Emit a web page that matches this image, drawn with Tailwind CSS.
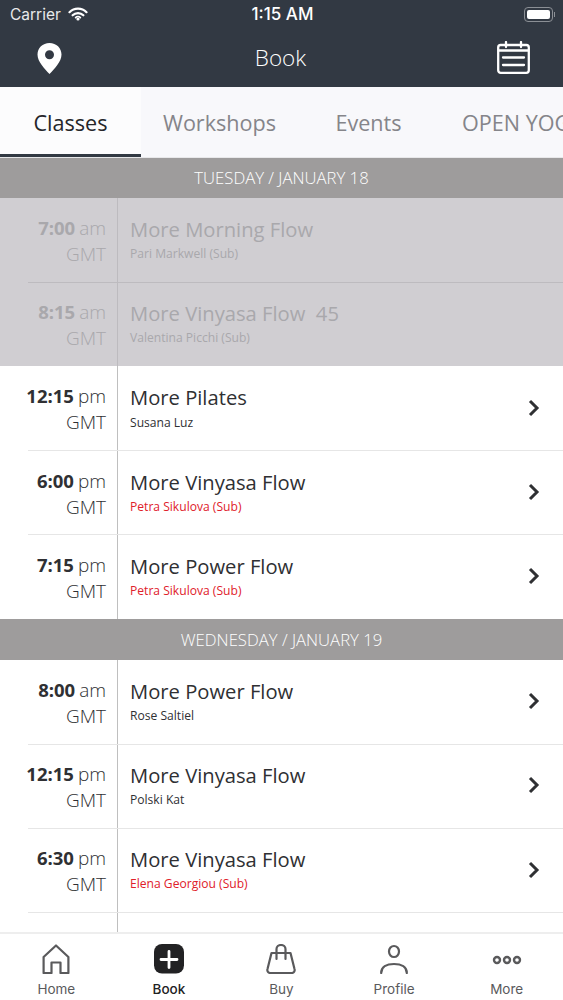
<!DOCTYPE html>
<html lang="en">
<head>
    <meta charset="UTF-8">
    <meta name="viewport" content="width=device-width, initial-scale=1.0">
    <title>Book</title>
    <script src="https://cdn.jsdelivr.net/npm/@tailwindcss/browser@4"></script>
</head>
<body>
<div class="w-[563px] h-[1000px] flex flex-col overflow-hidden bg-white antialiased font-['Open_Sans',sans-serif]">

    <!-- status + nav -->
    <header class="h-[87px] shrink-0 bg-[#323943] text-white flex flex-col">
        <div class="h-[29px] flex items-center justify-between pl-[10px] pr-[8px] font-['Inter',sans-serif] text-[15.500px]">
            <div class="w-[180px] flex items-center gap-[7px] text-[#e8e9ea]">
                <span>Carrier</span>
                <svg width="20" height="15" viewBox="0 0 20 15" fill="none" stroke="#fff" stroke-width="2.200" stroke-linecap="round">
                    <path d="M1.500 5.200a12 12 0 0 1 17 0"/>
                    <path d="M4.600 8.300a7.600 7.600 0 0 1 10.800 0"/>
                    <circle cx="10" cy="12" r="1.600" fill="#fff" stroke="none"/>
                    <path d="M7.600 10.600a3.400 3.400 0 0 1 4.800 0" stroke-width="1.600"/>
                </svg>
            </div>
            <span class="font-medium text-[17px]">1:15 AM</span>
            <div class="w-[180px] flex justify-end items-center">
                <div class="w-[29px] h-[15px] rounded-[4px] border border-[#8b8f95] p-[2px]">
                    <div class="w-full h-full rounded-[2px] bg-white"></div>
                </div>
                <div class="w-[1px] h-[5px] ml-[1px] bg-[#8b8f95]"></div>
            </div>
        </div>
        <div class="flex-1 flex items-center justify-between pl-[37px] pr-[33px] pb-[1px]">
            <svg width="25" height="32" viewBox="0 0 25 32">
                <path fill-rule="evenodd" fill="#fff" d="M12.500 1C5.600 1 .5 6 .5 12.600c0 4 1.800 7 4.200 10.400 2.400 3.200 5.200 6.400 7.800 9 2.600-2.600 5.400-5.800 7.800-9 2.400-3.400 4.200-6.400 4.200-10.400C24.500 6 19.400 1 12.500 1zM12.500 8.300a4.500 4.500 0 1 1 0 9 4.500 4.500 0 0 1 0-9z"/>
            </svg>
            <span class="text-[22.500px] font-light pl-[2px]">Book</span>
            <svg width="33" height="33" viewBox="0 0 33 33" fill="none" stroke="#fff" stroke-width="2.300" stroke-linecap="round" stroke-linejoin="round">
                <rect x="1.200" y="4" width="30.600" height="27.800" rx="2.500"/>
                <path d="M9 1v5M24 1v5M2 9.500h29M6 16.500h21M6 24h21"/>
            </svg>
        </div>
    </header>

    <!-- tabs -->
    <nav class="h-[71px] shrink-0 flex bg-[#f8f8fb] text-[21.600px] text-[#85858a] overflow-hidden whitespace-nowrap border-b border-[#e8e8ea]">
        <div class="w-[141px] shrink-0 flex items-center justify-center pt-[5px] text-[#25262a] border-b-[3px] border-[#323943] bg-white/60">Classes</div>
        <div class="w-[157px] shrink-0 flex items-center justify-center pt-[2px]">Workshops</div>
        <div class="w-[164px] shrink-0 flex items-center justify-center pr-[23px] pt-[2px]">Events</div>
        <div class="shrink-0 flex items-center pt-[2px]">OPEN YOGA</div>
    </nav>

    <!-- schedule -->
    <main class="flex-1 min-h-0 overflow-hidden">
        <div class="h-[40px] flex items-center justify-center bg-[#9e9c9c] text-white text-[16.700px] font-light">TUESDAY / JANUARY 18</div>

        <div class="bg-[#d0ced2]">
            <div class="h-[85px] ml-[28px] flex border-b border-[#bdbbbf] text-[#a9a8ac]">
                <div class="w-[90px] shrink-0 border-r border-[#bdbbbf] pr-[11px] pt-[17px] text-right text-[19px] leading-[26px] font-light">
                    <div class="flex justify-end gap-[4px]"><span class="font-bold text-[18.500px]">7:00</span> <span>am</span></div>
                    <div>GMT</div>
                </div>
                <div class="pl-[12px] pt-[16px]">
                    <div class="text-[20.200px] leading-[30px]">More Morning Flow</div>
                    <div class="text-[12.100px] leading-[20px]">Pari Markwell (Sub)</div>
                </div>
            </div>
            <div class="h-[83px] ml-[28px] flex text-[#a9a8ac]">
                <div class="w-[90px] shrink-0 border-r border-[#bdbbbf] pr-[11px] pt-[16px] text-right text-[19px] leading-[26px] font-light">
                    <div class="flex justify-end gap-[4px]"><span class="font-bold text-[18.500px]">8:15</span> <span>am</span></div>
                    <div>GMT</div>
                </div>
                <div class="pl-[12px] pt-[15px]">
                    <div class="text-[20.200px] leading-[30px] whitespace-pre">More Vinyasa Flow  45</div>
                    <div class="text-[12.100px] leading-[20px]">Valentina Picchi (Sub)</div>
                </div>
            </div>
        </div>

        <div class="h-[85px] ml-[28px] flex items-stretch border-b border-[#e6e6e6] text-[#2f3033]">
            <div class="w-[90px] shrink-0 border-r border-[#bfbfbf] pr-[11px] pt-[17px] text-right text-[19px] leading-[26px] font-light">
                <div class="flex justify-end gap-[4px]"><span class="font-bold text-[18.500px]">12:15</span> <span>pm</span></div>
                <div>GMT</div>
            </div>
            <div class="flex-1 pl-[12px] pt-[16px]">
                <div class="text-[20.200px] leading-[30px]">More Pilates</div>
                <div class="text-[12.100px] leading-[21px]">Susana Luz</div>
            </div>
            <svg class="self-center mr-[23px]" width="12" height="18" viewBox="0 0 12 18" fill="none" stroke="#2f3033" stroke-width="3"><path d="M2 2l7 7-7 7"/></svg>
        </div>
        <div class="h-[84px] ml-[28px] flex items-stretch border-b border-[#e6e6e6] text-[#2f3033]">
            <div class="w-[90px] shrink-0 border-r border-[#bfbfbf] pr-[11px] pt-[17px] text-right text-[19px] leading-[26px] font-light">
                <div class="flex justify-end gap-[4px]"><span class="font-bold text-[18.500px]">6:00</span> <span>pm</span></div>
                <div>GMT</div>
            </div>
            <div class="flex-1 pl-[12px] pt-[16px]">
                <div class="text-[20.200px] leading-[30px]">More Vinyasa Flow</div>
                <div class="text-[12.100px] leading-[20px] text-[#e0202a]">Petra Sikulova (Sub)</div>
            </div>
            <svg class="self-center mr-[23px] mb-[2px]" width="12" height="18" viewBox="0 0 12 18" fill="none" stroke="#2f3033" stroke-width="3"><path d="M2 2l7 7-7 7"/></svg>
        </div>
        <div class="h-[84px] ml-[28px] flex items-stretch text-[#2f3033]">
            <div class="w-[90px] shrink-0 border-r border-[#bfbfbf] pr-[11px] pt-[17px] text-right text-[19px] leading-[26px] font-light">
                <div class="flex justify-end gap-[4px]"><span class="font-bold text-[18.500px]">7:15</span> <span>pm</span></div>
                <div>GMT</div>
            </div>
            <div class="flex-1 pl-[12px] pt-[16px]">
                <div class="text-[20.200px] leading-[30px]">More Power Flow</div>
                <div class="text-[12.100px] leading-[20px] text-[#e0202a]">Petra Sikulova (Sub)</div>
            </div>
            <svg class="self-center mr-[23px] mb-[2px]" width="12" height="18" viewBox="0 0 12 18" fill="none" stroke="#2f3033" stroke-width="3"><path d="M2 2l7 7-7 7"/></svg>
        </div>

        <div class="h-[41px] flex items-center justify-center bg-[#9e9c9c] text-white text-[16.700px] font-light">WEDNESDAY / JANUARY 19</div>

        <div class="h-[85px] ml-[28px] flex items-stretch border-b border-[#e6e6e6] text-[#2f3033]">
            <div class="w-[90px] shrink-0 border-r border-[#bfbfbf] pr-[11px] pt-[17px] text-right text-[19px] leading-[26px] font-light">
                <div class="flex justify-end gap-[4px]"><span class="font-bold text-[18.500px]">8:00</span> <span>am</span></div>
                <div>GMT</div>
            </div>
            <div class="flex-1 pl-[12px] pt-[16px]">
                <div class="text-[20.200px] leading-[30px]">More Power Flow</div>
                <div class="text-[12.100px] leading-[20px]">Rose Saltiel</div>
            </div>
            <svg class="self-center mr-[23px] mb-[2px]" width="12" height="18" viewBox="0 0 12 18" fill="none" stroke="#2f3033" stroke-width="3"><path d="M2 2l7 7-7 7"/></svg>
        </div>
        <div class="h-[84px] ml-[28px] flex items-stretch border-b border-[#e6e6e6] text-[#2f3033]">
            <div class="w-[90px] shrink-0 border-r border-[#bfbfbf] pr-[11px] pt-[16px] text-right text-[19px] leading-[26px] font-light">
                <div class="flex justify-end gap-[4px]"><span class="font-bold text-[18.500px]">12:15</span> <span>pm</span></div>
                <div>GMT</div>
            </div>
            <div class="flex-1 pl-[12px] pt-[15px]">
                <div class="text-[20.200px] leading-[30px]">More Vinyasa Flow</div>
                <div class="text-[12.100px] leading-[20px]">Polski Kat</div>
            </div>
            <svg class="self-center mr-[23px] mb-[4px]" width="12" height="18" viewBox="0 0 12 18" fill="none" stroke="#2f3033" stroke-width="3"><path d="M2 2l7 7-7 7"/></svg>
        </div>
        <div class="h-[84px] ml-[28px] flex items-stretch border-b border-[#e6e6e6] text-[#2f3033]">
            <div class="w-[90px] shrink-0 border-r border-[#bfbfbf] pr-[11px] pt-[16px] text-right text-[19px] leading-[26px] font-light">
                <div class="flex justify-end gap-[4px]"><span class="font-bold text-[18.500px]">6:30</span> <span>pm</span></div>
                <div>GMT</div>
            </div>
            <div class="flex-1 pl-[12px] pt-[15px]">
                <div class="text-[20.200px] leading-[30px]">More Vinyasa Flow</div>
                <div class="text-[12.100px] leading-[20px] text-[#e0202a]">Elena Georgiou (Sub)</div>
            </div>
            <svg class="self-center mr-[23px] mb-[2px]" width="12" height="18" viewBox="0 0 12 18" fill="none" stroke="#2f3033" stroke-width="3"><path d="M2 2l7 7-7 7"/></svg>
        </div>
        <div class="h-[40px] ml-[28px] w-[90px] border-r border-[#bfbfbf]"></div>
    </main>

    <!-- bottom tabs -->
    <footer class="h-[68px] shrink-0 grid grid-cols-5 bg-white border-t-2 border-[#eeeeee] font-['Inter',sans-serif] text-[13.500px] text-[#5a5a5c]">
        <div class="flex flex-col items-center pt-[10px]">
            <svg width="30" height="30" viewBox="0 0 30 30" fill="none" stroke="#5a5a5c" stroke-width="2.200" stroke-linejoin="round">
                <path d="M2.600 29V13L15 1.500 27.400 13v16h-7.900V18.500h-9V29z"/>
            </svg>
            <span class="mt-[6px] leading-[18px]">Home</span>
        </div>
        <div class="flex flex-col items-center pt-[10px] text-[#222224] font-medium">
            <svg width="30" height="30" viewBox="0 0 30 30">
                <rect width="30" height="29.500" rx="8" fill="#222224"/>
                <path d="M15 7.500v16M7 15.500h16" stroke="#fff" stroke-width="2.800" stroke-linecap="round"/>
            </svg>
            <span class="mt-[6px] leading-[18px]">Book</span>
        </div>
        <div class="flex flex-col items-center pt-[10px]">
            <svg width="30" height="30" viewBox="0 0 30 30" fill="none" stroke="#5a5a5c" stroke-width="2.200" stroke-linecap="round" stroke-linejoin="round">
                <path d="M5.500 9h19l4 16a3 3 0 0 1-3 4h-21a3 3 0 0 1-3-4z"/>
                <path d="M10.500 15V5a4.500 4 0 0 1 9 0v10"/>
            </svg>
            <span class="mt-[6px] leading-[18px]">Buy</span>
        </div>
        <div class="flex flex-col items-center pt-[10px]">
            <svg width="30" height="30" viewBox="0 0 30 30" fill="none" stroke="#5a5a5c" stroke-width="2.200" stroke-linecap="round">
                <ellipse cx="15" cy="7.500" rx="5" ry="5.500"/>
                <path d="M2.200 29C2.200 23 7.500 20 15 20s12.800 3 12.800 9"/>
            </svg>
            <span class="mt-[6px] leading-[18px]">Profile</span>
        </div>
        <div class="flex flex-col items-center pt-[10px]">
            <svg width="30" height="30" viewBox="0 0 30 30" fill="none" stroke="#5a5a5c" stroke-width="2.400">
                <circle cx="5" cy="16" r="3"/>
                <circle cx="15" cy="16" r="3"/>
                <circle cx="25" cy="16" r="3"/>
            </svg>
            <span class="mt-[6px] leading-[18px]">More</span>
        </div>
    </footer>
</div>
</body>
</html>
